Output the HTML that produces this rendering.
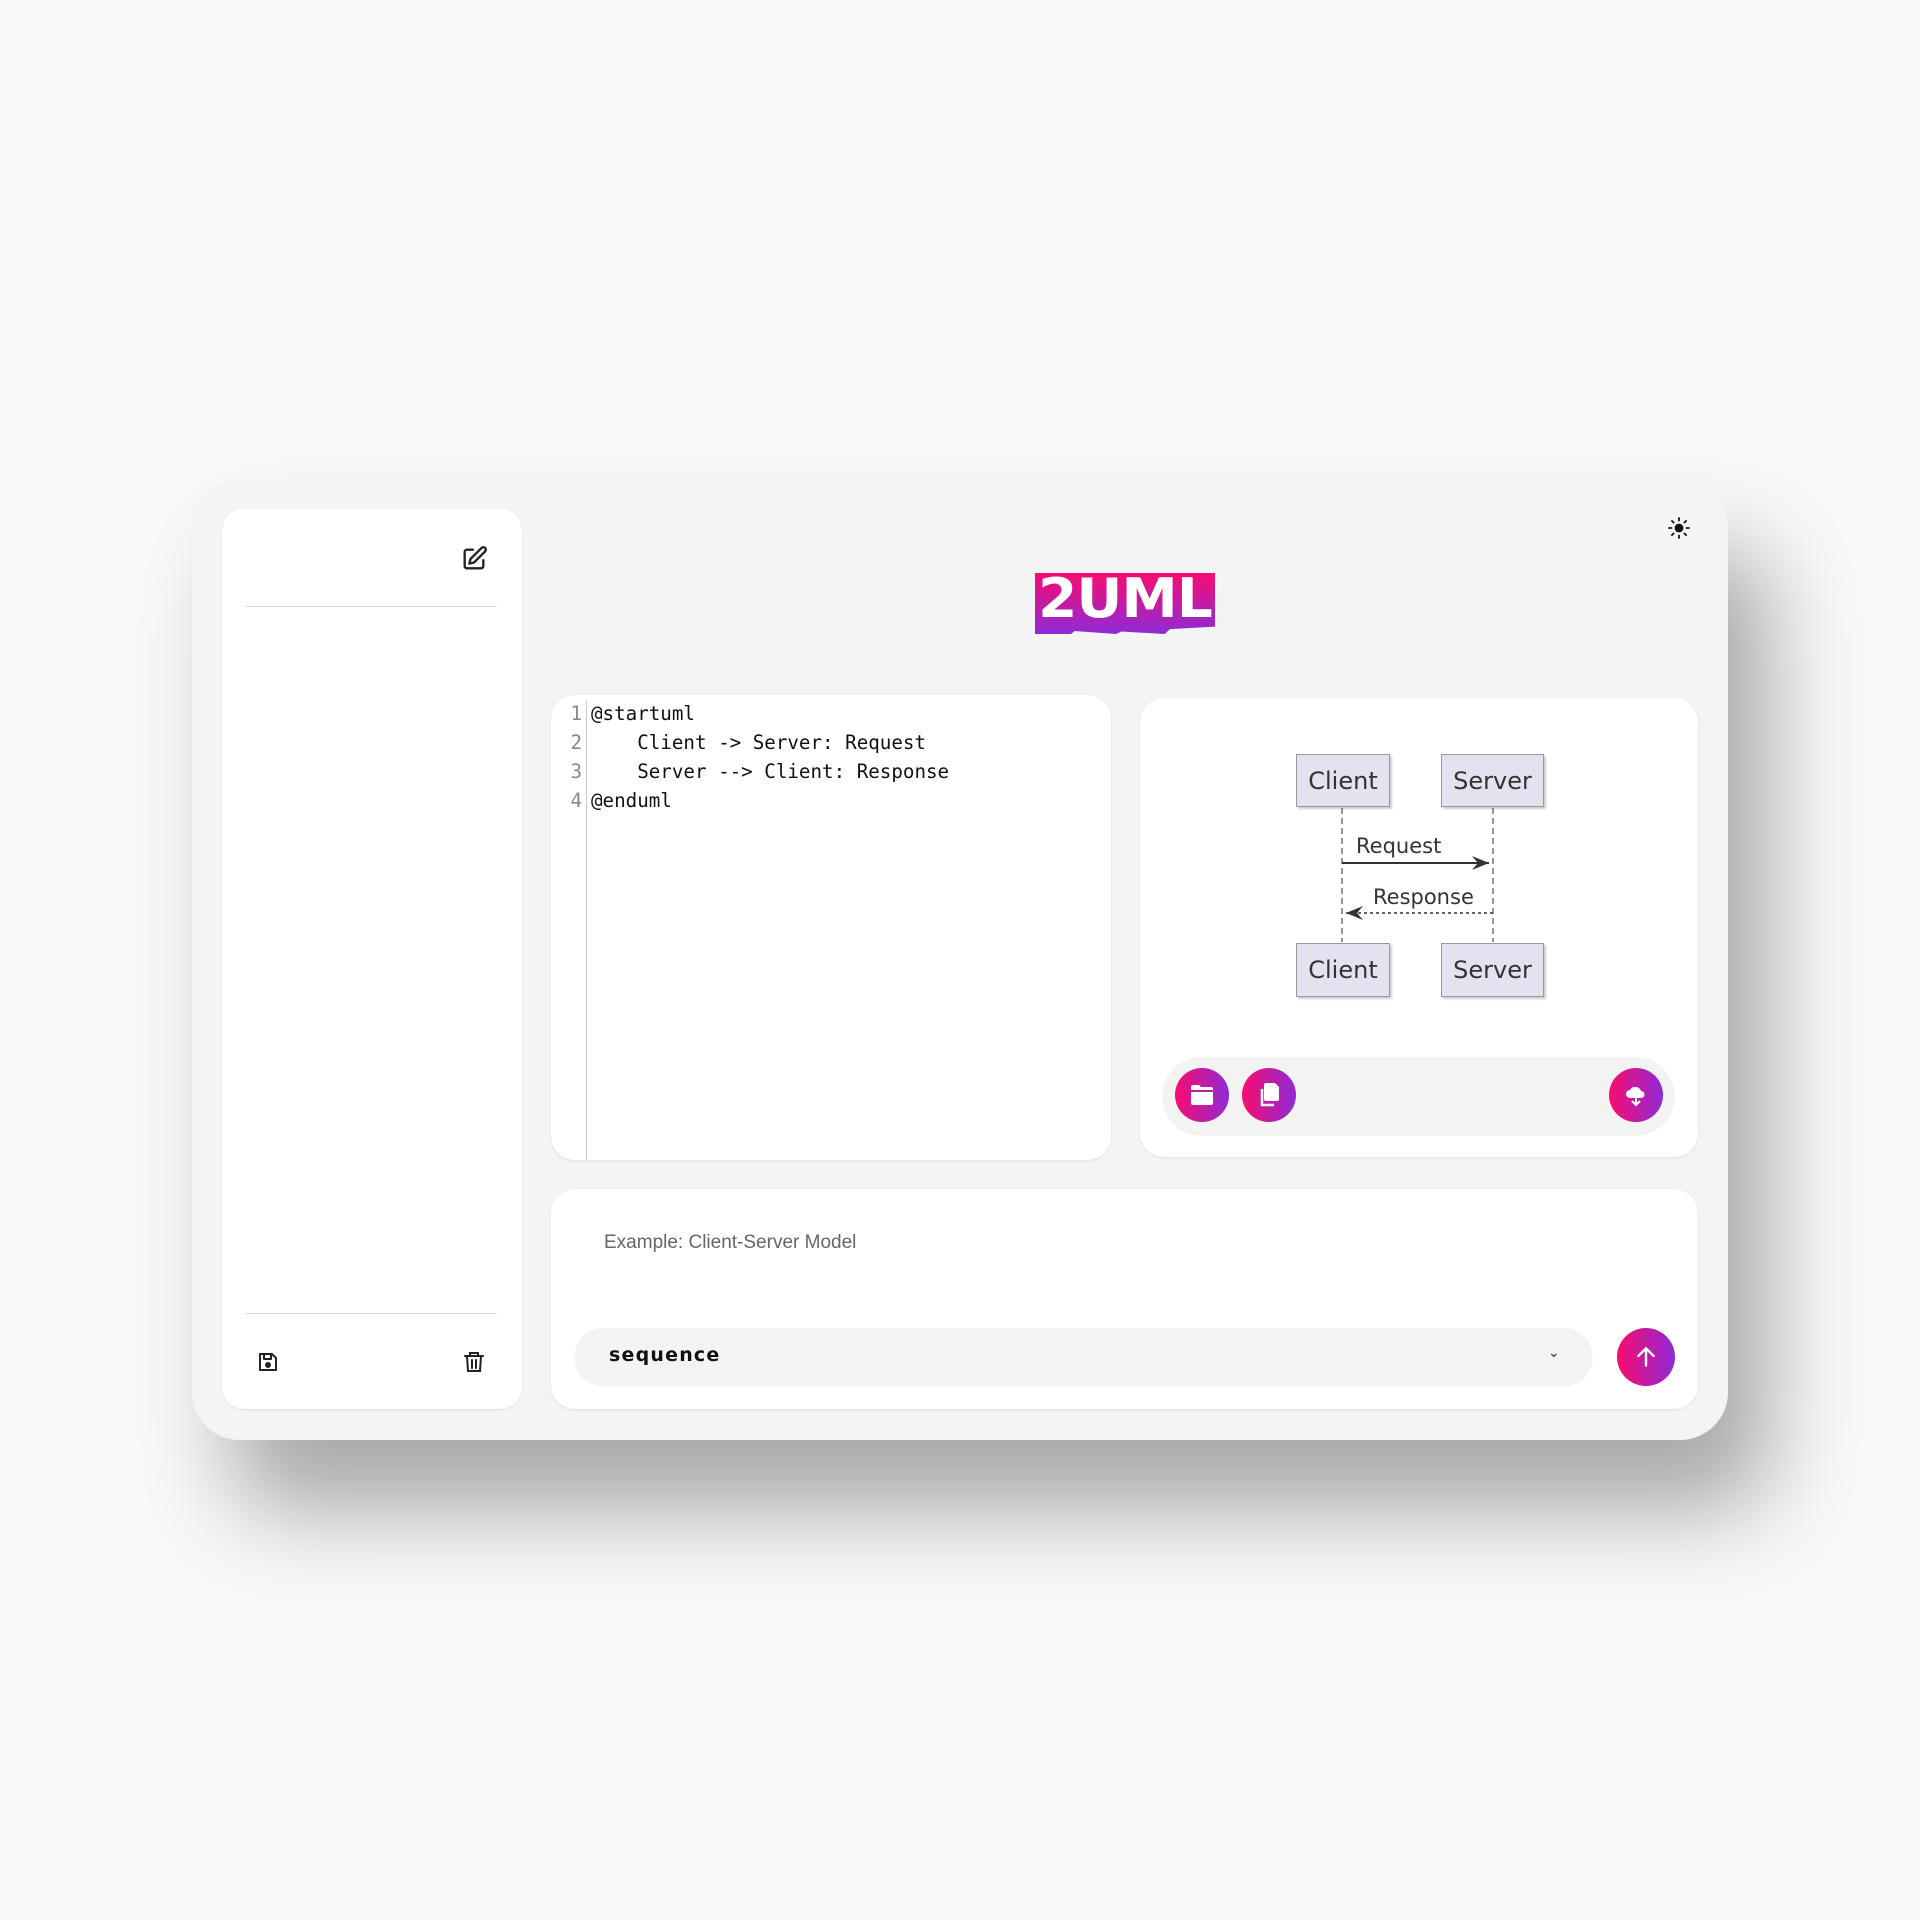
<!DOCTYPE html>
<html><head><meta charset="utf-8"><style>
*{box-sizing:border-box;margin:0;padding:0}
body{width:1920px;height:1920px;background:#f7f8f9;position:relative;font-family:"Liberation Sans",sans-serif;overflow:hidden}
.abs{position:absolute}
.card{left:192px;top:480px;width:1536px;height:960px;background:#f4f4f4;border-radius:48px;box-shadow:40px 70px 90px rgba(0,0,0,0.32)}
.side{left:222px;top:509px;width:300px;height:900px;background:#fff;border-radius:22px;box-shadow:0 1px 2px rgba(0,0,0,0.08)}
.hr{height:1px;background:#ddd;left:245px;width:252px}
.panel{background:#fff;border-radius:24px;box-shadow:0 1px 3px rgba(0,0,0,0.08)}
.code{font-family:"DejaVu Sans Mono","Liberation Mono",monospace;font-size:19.2px;line-height:29px;color:#111;white-space:pre}
.ln{color:#888;text-align:right;width:30px}
.box{background:#e2e2f0;border:1.5px solid #999;box-shadow:2px 2px 2px rgba(0,0,0,0.2);font-size:24px;color:#333;display:flex;align-items:center;justify-content:center;font-family:"DejaVu Sans",sans-serif}
.btn{width:54px;height:54px;border-radius:50%;background:linear-gradient(90deg,#f70d6e,#9029d6);display:flex;align-items:center;justify-content:center}
</style></head><body>
<div class="abs card"></div>
<div class="abs side"></div>
<svg class="abs" style="left:460px;top:545px" width="28" height="28" viewBox="0 0 24 24" fill="none" stroke="#222" stroke-width="2" stroke-linecap="round" stroke-linejoin="round"><path d="M11 4H6a2 2 0 0 0-2 2v12a2 2 0 0 0 2 2h12a2 2 0 0 0 2-2v-5"/><path d="M18.5 2.5a2.1 2.1 0 0 1 3 3L12 15l-4 1 1-4z"/></svg>
<div class="abs hr" style="top:606px"></div>
<div class="abs hr" style="top:1313px"></div>
<svg class="abs" style="left:256px;top:1350px" width="24" height="24" viewBox="0 0 24 24" fill="none" stroke="#222" stroke-width="2" stroke-linejoin="round"><path d="M4 4h12l4 4v12H4z"/><path d="M8 4v5h7V4"/><circle cx="12" cy="15" r="2" fill="#222"/></svg>
<svg class="abs" style="left:462px;top:1349px" width="24" height="26" viewBox="0 0 24 24" fill="none" stroke="#222" stroke-width="2" stroke-linecap="round"><path d="M3 6h18M8 6V3h8v3M5 6l1 15h12l1-15M10 10v8M14 10v8"/></svg>
<svg class="abs" style="left:1667px;top:516px" width="24" height="24" viewBox="0 0 24 24" fill="none" stroke="#111" stroke-width="1.8" stroke-linecap="round"><circle cx="12" cy="12" r="3.5" fill="#111"/><path d="M12 2v2.5M12 19.5V22M2 12h2.5M19.5 12H22M4.9 4.9l1.7 1.7M17.4 17.4l1.7 1.7M4.9 19.1l1.7-1.7M17.4 6.6l1.7-1.7"/></svg>
<div class="abs" style="left:1035px;top:573px;width:180px;height:61px;background:linear-gradient(180deg,#f70d6e,#8e2ad8);clip-path:polygon(0 0,100% 0,100% 88%,75% 92%,72% 100%,48% 96%,45% 100%,22% 95%,20% 100%,0 100%);overflow:hidden"><span class="abs" style="left:3px;top:-4px;font:900 54px/60px 'DejaVu Sans',sans-serif;color:#fff;letter-spacing:-1px;display:inline-block;transform:scaleX(1.05);transform-origin:left">2UML</span></div>
<div class="abs panel" style="left:551px;top:695px;width:560px;height:465px"></div>
<div class="abs" style="left:586px;top:700px;width:1px;height:460px;background:#ccc"></div>
<div class="abs code ln" style="left:552px;top:699px">1
2
3
4</div>
<div class="abs code" style="left:591px;top:699px">@startuml
    Client -> Server: Request
    Server --> Client: Response
@enduml</div>
<div class="abs panel" style="left:1140px;top:698px;width:558px;height:459px"></div>
<svg class="abs" style="left:1290px;top:800px" width="260" height="150"><line x1="52" y1="8" x2="52" y2="142" stroke="#777" stroke-width="1.5" stroke-dasharray="6,4"/><line x1="203" y1="8" x2="203" y2="142" stroke="#777" stroke-width="1.5" stroke-dasharray="6,4"/><line x1="52" y1="63" x2="199" y2="63" stroke="#333" stroke-width="2"/><path d="M182 56l17 7-17 7 6-7z" fill="#333"/><line x1="56" y1="113" x2="203" y2="113" stroke="#333" stroke-width="1.5" stroke-dasharray="3,3"/><path d="M73 106l-17 7 17 7-6-7z" fill="#333"/></svg>
<div class="abs" style="left:1356px;top:834px;font:21px 'DejaVu Sans',sans-serif;color:#333">Request</div>
<div class="abs" style="left:1373px;top:885px;font:21px 'DejaVu Sans',sans-serif;color:#333">Response</div>
<div class="abs box" style="left:1296px;top:754px;width:94px;height:53px">Client</div>
<div class="abs box" style="left:1441px;top:754px;width:103px;height:53px">Server</div>
<div class="abs box" style="left:1296px;top:943px;width:94px;height:54px">Client</div>
<div class="abs box" style="left:1441px;top:943px;width:103px;height:54px">Server</div>
<div class="abs" style="left:1163px;top:1057px;width:511px;height:77px;background:#f3f3f3;border-radius:40px;box-shadow:0 1px 2px rgba(0,0,0,0.1)"></div>
<div class="abs btn" style="left:1175px;top:1068px"><svg width="24" height="22" viewBox="0 0 24 22"><path d="M1 3a2 2 0 0 1 2-2h6l2 2h10a2 2 0 0 1 2 2v1H1z M1 8h22v11a2 2 0 0 1-2 2H3a2 2 0 0 1-2-2z" fill="#fff"/></svg></div>
<div class="abs btn" style="left:1242px;top:1068px"><svg width="22" height="26" viewBox="0 0 22 26"><path d="M8 1h9l4 4v12a2 2 0 0 1-2 2H8a2 2 0 0 1-2-2V3a2 2 0 0 1 2-2z" fill="#fff"/><path d="M4 7v16h12" stroke="#fff" stroke-width="2.5" fill="none"/></svg></div>
<div class="abs btn" style="left:1609px;top:1068px"><svg width="24" height="24" viewBox="0 0 24 24"><path d="M6 15a4 4 0 0 1 0-8 6 6 0 0 1 11 1 3.5 3.5 0 0 1 0 7z" fill="#fff"/><path d="M12 10v12M8 18l4 4 4-4" stroke="#fff" stroke-width="2" fill="none"/></svg></div>
<div class="abs panel" style="left:551px;top:1189px;width:1147px;height:220px"></div>
<div class="abs" style="left:604px;top:1232px;font-size:19px;color:#666">Example: Client-Server Model</div>
<div class="abs" style="left:575px;top:1328px;width:1017px;height:57px;background:#f3f3f3;border-radius:28px;box-shadow:0 1px 2px rgba(0,0,0,0.08)"></div>
<div class="abs" style="left:609px;top:1344px;font:bold 19px 'DejaVu Sans',sans-serif;color:#111;letter-spacing:1.2px">sequence</div>
<div class="abs" style="left:1548px;top:1344px;font-size:14px;color:#333">⌄</div>
<div class="abs btn" style="left:1617px;top:1328px;width:58px;height:58px"><svg width="26" height="26" viewBox="0 0 24 24" fill="none" stroke="#fff" stroke-width="2.2" stroke-linecap="round" stroke-linejoin="round"><path d="M12 20V4M5 11l7-7 7 7"/></svg></div>
</body></html>
